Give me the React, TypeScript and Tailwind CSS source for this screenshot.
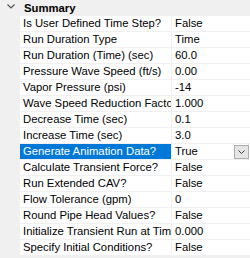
import React from "react";

const rows: [string, string][] = [
  ["Is User Defined Time Step?", "False"],
  ["Run Duration Type", "Time"],
  ["Run Duration (Time) (sec)", "60.0"],
  ["Pressure Wave Speed (ft/s)", "0.00"],
  ["Vapor Pressure (psi)", "-14"],
  ["Wave Speed Reduction Factor", "1.000"],
  ["Decrease Time (sec)", "0.1"],
  ["Increase Time (sec)", "3.0"],
  ["Generate Animation Data?", "True"],
  ["Calculate Transient Force?", "False"],
  ["Run Extended CAV?", "False"],
  ["Flow Tolerance (gpm)", "0"],
  ["Round Pipe Head Values?", "False"],
  ["Initialize Transient Run at Time", "0.000"],
  ["Specify Initial Conditions?", "False"],
];

export default function App() {
  return (
    <div className="w-[250px] h-[258px] overflow-hidden bg-[#f0f0f0] font-['Liberation_Sans',Arial,sans-serif] text-[11.3px] text-black">
      <div className="flex h-4 items-center leading-4">
        <div className="flex w-5 h-4 items-start justify-center pt-[4px] pl-[1px]">
          <svg width="8" height="5" viewBox="0 0 8 5">
            <path d="M0.5 0.5 L4 4 L7.5 0.5" fill="none" stroke="#505050" strokeWidth="1.1" />
          </svg>
        </div>
        <span className="pl-1 font-bold">Summary</span>
      </div>
      <div className="flex flex-col gap-px ml-5">
        {rows.map(([label, value], i) => {
          const sel = i === 8;
          return (
            <div key={label} className="flex h-[15px] gap-px leading-[15px]">
              <div
                className={
                  sel
                    ? "w-[151px] shrink-0 overflow-hidden whitespace-nowrap pl-[3px] bg-[#0078d7] text-white"
                    : "w-[151px] shrink-0 overflow-hidden whitespace-nowrap pl-[3px] bg-white"
                }
              >
                {label}
              </div>
              <div className="flex flex-1 items-center bg-white pl-[3px] whitespace-nowrap overflow-hidden">
                <span className="flex-1">{value}</span>
                {sel && (
                  <div className="mr-px flex h-[14px] w-[15px] items-center justify-center border border-[#adadad] bg-[#e5e5e5]">
                    <svg width="7" height="4" viewBox="0 0 7 4">
                      <path d="M0.5 0.5 L3.5 3.5 L6.5 0.5" fill="none" stroke="#404040" strokeWidth="1" />
                    </svg>
                  </div>
                )}
              </div>
            </div>
          );
        })}
      </div>
    </div>
  );
}
